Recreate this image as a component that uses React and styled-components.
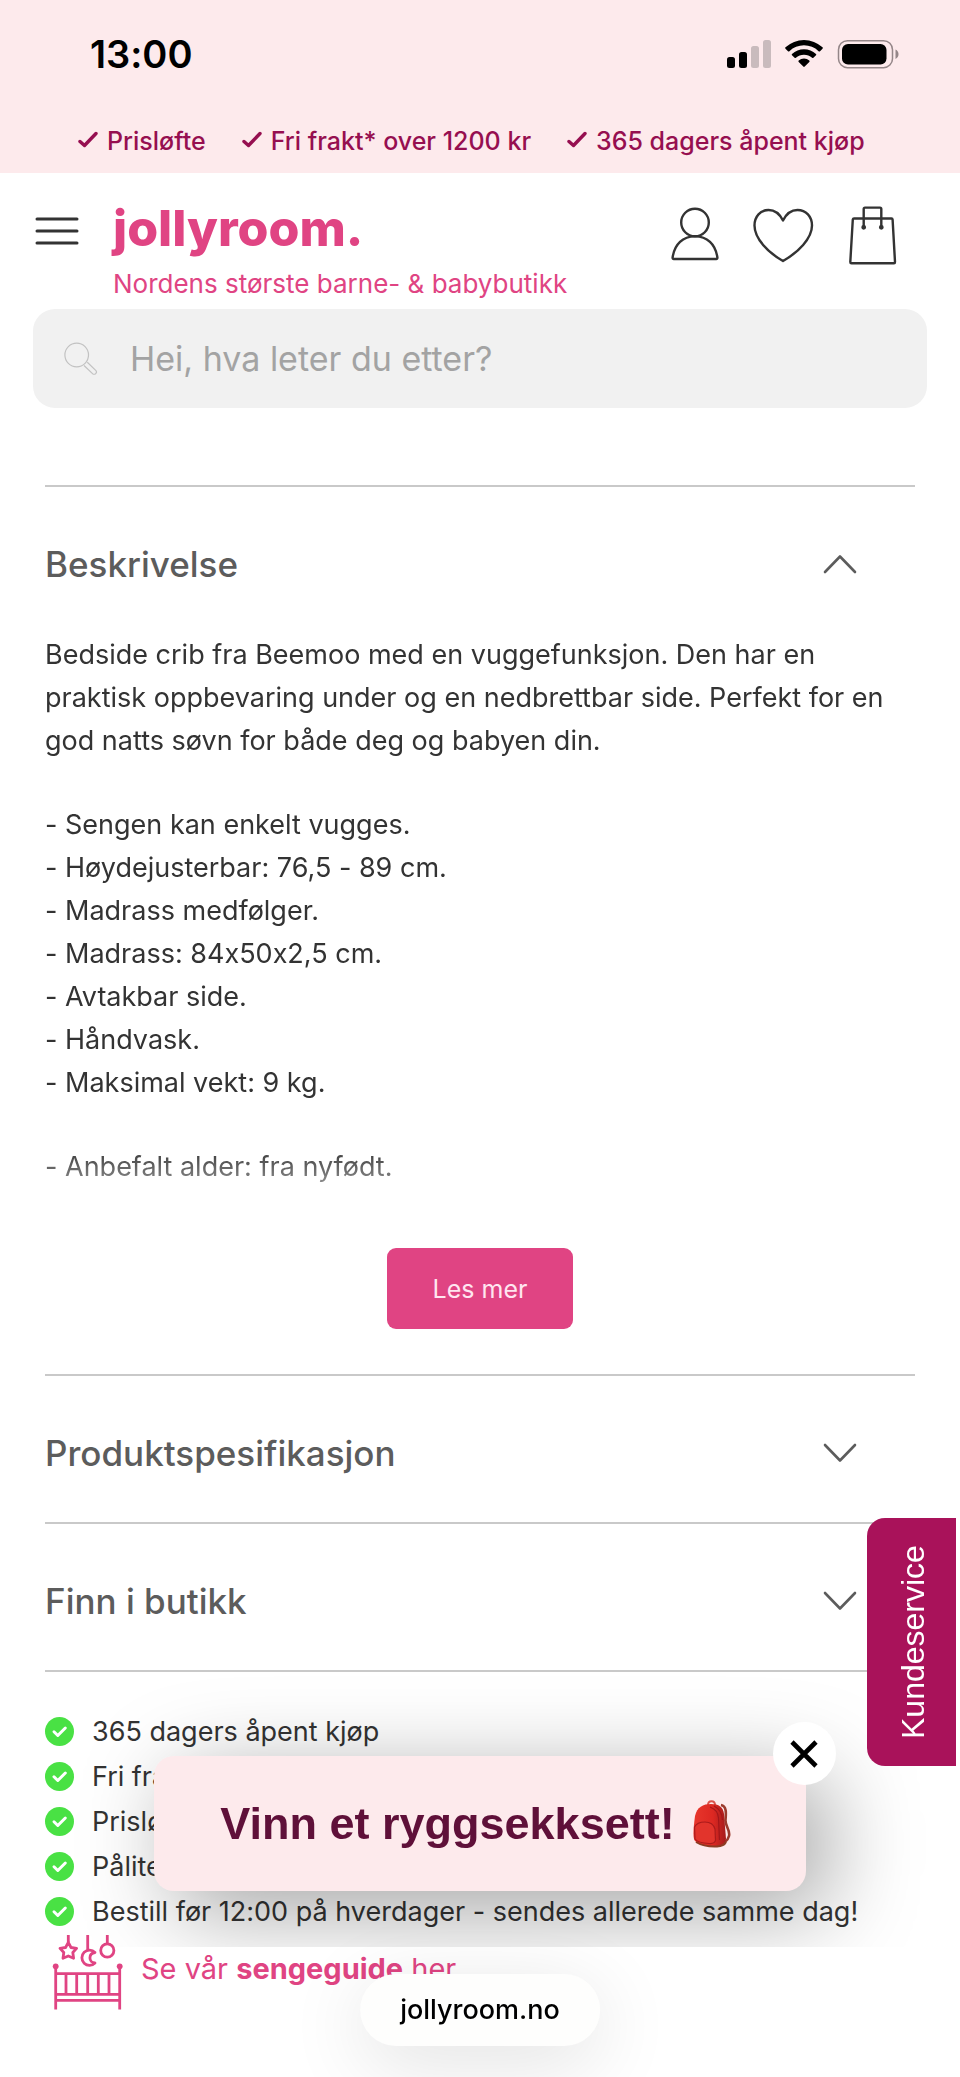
import React, { useState } from "react";
import styled, { createGlobalStyle, ThemeProvider } from "styled-components";

const theme = {
  pink: "#e04483",
  blush: "#fdeaec",
  berry: "#a9125a",
  wine: "#960f50",
  plum: "#5f1039",
  text: "#333333",
  heading: "#5c5c5c",
  rule: "#c9c9c9",
  field: "#f1f1f1",
  green: "#49e144"
};

const usps = ["Prisløfte", "Fri frakt* over 1200 kr", "365 dagers åpent kjøp"];

const features = [
  "- Sengen kan enkelt vugges.",
  "- Høydejusterbar: 76,5 - 89 cm.",
  "- Madrass medfølger.",
  "- Madrass: 84x50x2,5 cm.",
  "- Avtakbar side.",
  "- Håndvask.",
  "- Maksimal vekt: 9 kg."
];

const promises = [
  "365 dagers åpent kjøp",
  "Fri frakt* over 1200 kr",
  "Prisløfte",
  "Pålitelig kundeservice",
  "Bestill før 12:00 på hverdager - sendes allerede samme dag!"
];

const App = () => {
  const [open, setOpen] = useState("description");
  const [showPromo, setShowPromo] = useState(true);

  const toggle = id => setOpen(open === id ? null : id);

  return (
    <ThemeProvider theme={theme}>
      <GlobalStyle />
      <TopBand>
        <StatusBar>
          <Clock>13:00</Clock>
          <StatusIcons />
        </StatusBar>
        <UspList>
          {usps.map(usp => (
            <Usp key={usp}>
              <UspCheck />
              {usp}
            </Usp>
          ))}
        </UspList>
      </TopBand>

      <Header>
        <HeaderRow>
          <MenuButton aria-label="Meny">
            <MenuIcon />
          </MenuButton>
          <Brand href="#">
            <Logo>jollyroom.</Logo>
            <Tagline>Nordens største barne- &amp; babybutikk</Tagline>
          </Brand>
          <Actions>
            <ActionLink href="#konto" aria-label="Min konto">
              <UserIcon />
            </ActionLink>
            <ActionLink href="#favoritter" aria-label="Favoritter">
              <HeartIcon />
            </ActionLink>
            <ActionLink href="#handlekurv" aria-label="Handlekurv">
              <BagIcon />
            </ActionLink>
          </Actions>
        </HeaderRow>
        <SearchBox>
          <SearchIcon />
          <SearchInput
            type="search"
            aria-label="Søk"
            placeholder="Hei, hva leter du etter?"
          />
        </SearchBox>
      </Header>

      <Main>
        <Section
          title="Beskrivelse"
          isOpen={open === "description"}
          onToggle={() => toggle("description")}
        >
          <Description>
            <p>
              Bedside crib fra Beemoo med en vuggefunksjon. Den har en praktisk
              oppbevaring under og en nedbrettbar side. Perfekt for en god natts
              søvn for både deg og babyen din.
            </p>
            <FeatureList>
              {features.map(feature => (
                <li key={feature}>{feature}</li>
              ))}
            </FeatureList>
            <p>- Anbefalt alder: fra nyfødt.</p>
          </Description>
          <ReadMore>Les mer</ReadMore>
        </Section>
        <Section
          title="Produktspesifikasjon"
          isOpen={open === "specification"}
          onToggle={() => toggle("specification")}
        />
        <Section
          title="Finn i butikk"
          isOpen={open === "store"}
          onToggle={() => toggle("store")}
        />

        <PromiseList>
          {promises.map(promise => (
            <PromiseItem key={promise}>
              <RoundCheck />
              {promise}
            </PromiseItem>
          ))}
        </PromiseList>

        <GuideLink href="#sengeguide">
          <CribIcon />
          <GuideText>
            Se vår <strong>sengeguide</strong> her
          </GuideText>
        </GuideLink>
      </Main>

      {showPromo && (
        <PromoLayer>
          <Promo>
            <PromoLink href="#vinn">
              Vinn et ryggsekksett! <Backpack />
            </PromoLink>
            <CloseButton aria-label="Lukk" onClick={() => setShowPromo(false)}>
              <CloseIcon />
            </CloseButton>
          </Promo>
        </PromoLayer>
      )}
      <ServiceTab>Kundeservice</ServiceTab>
      <AddressPill>jollyroom.no</AddressPill>
    </ThemeProvider>
  );
};

const Section = ({ title, isOpen, onToggle, children }) => (
  <SectionContainer>
    <SectionTitle>
      <Trigger aria-expanded={isOpen} onClick={onToggle}>
        {title}
        <Chevron up={isOpen} />
      </Trigger>
    </SectionTitle>
    {isOpen && children && <Panel>{children}</Panel>}
  </SectionContainer>
);

const StatusIcons = () => (
  <svg width="174" height="32" viewBox="0 0 174 32" aria-hidden="true">
    <rect x="1" y="19" width="8" height="11" rx="2.5" />
    <rect x="13" y="14" width="8" height="16" rx="2.5" />
    <g fill="#c9bbbd">
      <rect x="25" y="8" width="8" height="22" rx="2.5" />
      <rect x="37" y="2" width="8" height="28" rx="2.5" />
    </g>
    <path d="M59.5 10.7a1 1 0 0 1 0-1.4 27.2 27.2 0 0 1 37 0 1 1 0 0 1 0 1.4l-2.5 2.5a1 1 0 0 1-1.4 0 21 21 0 0 0-29.2 0 1 1 0 0 1-1.4 0z" />
    <path d="M66 17.3a1 1 0 0 1 0-1.4 17.6 17.6 0 0 1 24 0 1 1 0 0 1 0 1.4l-2.6 2.5a1 1 0 0 1-1.3 0 12 12 0 0 0-16.2 0 1 1 0 0 1-1.3 0z" />
    <path d="M72.7 23.9a1 1 0 0 1 0-1.4 8.2 8.2 0 0 1 10.6 0 1 1 0 0 1 0 1.4l-4.6 4.7a1 1 0 0 1-1.4 0z" />
    <rect
      x="112.5"
      y="2.7"
      width="54"
      height="27"
      rx="9"
      fill="none"
      stroke="#948688"
      strokeWidth="1.5"
    />
    <rect x="116" y="6" width="44.5" height="20.5" rx="6" />
    <path d="M169.500 11.5c4 1.6 4 7.8 0 9.4z" fill="#948688" />
  </svg>
);

const UspCheck = () => (
  <svg width="20" height="20" viewBox="0 0 20 20" aria-hidden="true">
    <path
      d="M2 10.5 6.500 14.5 18 2.5"
      fill="none"
      stroke="currentColor"
      strokeWidth="3.4"
      strokeLinecap="round"
      strokeLinejoin="round"
    />
  </svg>
);

const MenuIcon = () => (
  <LineSvg width="44" height="28" viewBox="0 0 44 28" strokeWidth="3">
    <path d="M2 2h40M2 14h40M2 26h40" />
  </LineSvg>
);

const UserIcon = () => (
  <LineSvg width="48" height="60" viewBox="0 0 48 60" strokeWidth="2.4">
    <circle cx="24" cy="17.5" r="13.8" />
    <path d="M2.8 54C1.8 54 1.500 53.5 1.600 52.5 3.500 39 12 31.4 24 31.4S44.500 39 46.400 52.5C46.500 53.5 46.200 54 45.200 54Z" />
  </LineSvg>
);

const HeartIcon = () => (
  <LineSvg width="62" height="60" viewBox="0 0 62 60" strokeWidth="2.4">
    <path d="M30 15.500C26.5 8.500 21.5 5 15.500 5 7.500 5 1.500 11.500 1.500 20.500 1.500 33.500 15 47.500 30 56 45 47.500 59 33.500 59 20.500 59 11.500 53 5 44.500 5 38.500 5 33.500 8.500 30 15.500Z" />
  </LineSvg>
);

const BagIcon = () => (
  <LineSvg width="48" height="60" viewBox="0 0 48 60" strokeWidth="2.4">
    <path d="M5 13.500H42.500Q43.500 13.500 43.600 14.500L46 57Q46 58.300 45 58.300H2.500Q1.300 58.300 1.300 57L3.800 14.500Q4 13.500 5 13.500Z" />
    <path d="M14.700 21.500V4Q14.700 2.600 16 2.600H31Q32.300 2.600 32.300 4V21.500" />
    <circle cx="14.7" cy="22.3" r="1.2" />
    <circle cx="32.3" cy="22.3" r="1.2" />
  </LineSvg>
);

const SearchIcon = () => (
  <svg width="34" height="34" viewBox="0 0 34 34" aria-hidden="true">
    <g fill="none" stroke="#c2c2c2" strokeWidth="1.2">
      <circle cx="12.7" cy="13" r="11.8" />
      <path d="M20 23.500 28.500 31.600A2 2 0 0 0 31.700 28.400L23.300 20.200" />
    </g>
  </svg>
);

const Chevron = ({ up }) => (
  <LineSvg width="34" height="20" viewBox="0 0 34 20" strokeWidth="2.6">
    <path d={up ? "M2 18 17 2.5 32 18" : "M2 2 17 17.5 32 2"} />
  </LineSvg>
);

const RoundCheck = () => (
  <RoundBadge width="29" height="29" viewBox="0 0 29 29" aria-hidden="true">
    <circle cx="14.5" cy="14.5" r="14.5" />
    <path d="M9 14.8 12.8 18.5 20.3 11" />
  </RoundBadge>
);

const CribIcon = () => (
  <svg width="72" height="77" viewBox="0 0 72 77" aria-hidden="true">
    <g fill="none" stroke="currentColor" strokeWidth="2.8" strokeLinejoin="round">
      <path d="M16.300 1V8M35.700 1V16M55.300 1V10" />
      <path d="M16.300 8.300 19 13.500 24.600 14.400 20.800 18.500 21.600 24.300 16.300 22 11 24.300 11.800 18.500 8 14.400 13.600 13.500Z" />
      <path d="M43 18.500A7.600 7.600 0 1 0 43 29C36.500 28.500 36 19.500 43 18.500Z" />
      <circle cx="55.3" cy="16.5" r="6.6" />
      <path d="M3.700 32V75.500M67.700 32V75.500M3.700 39.700H67.700M3.700 60.300H67.700M3.700 66.300H67.700" />
      <path d="M14 39.700V60.300M24.700 39.700V60.300M35.700 39.700V60.300M46.300 39.700V60.300M57 39.700V60.300" />
    </g>
    <circle cx="3.7" cy="32.3" r="2.9" fill="currentColor" />
    <circle cx="67.7" cy="32.3" r="2.9" fill="currentColor" />
  </svg>
);

const Backpack = () => (
  <svg width="38" height="48" viewBox="0 0 38 48" role="img" aria-label="Ryggsekk">
    <defs>
      <linearGradient id="pack" x1="0" x2="1">
        <stop offset="0" stopColor="#e8362c" />
        <stop offset="0.6" stopColor="#dd2822" />
        <stop offset="1" stopColor="#a51c1c" />
      </linearGradient>
    </defs>
    <path
      d="M28 5C34 6 33 14 32.500 20S37.500 30 36 36 30 43 24 45"
      fill="none"
      stroke="#9a3a2c"
      strokeWidth="2.6"
    />
    <path
      d="M15 5C15 0 22 0 22 5"
      fill="none"
      stroke="#d9534b"
      strokeWidth="2"
    />
    <path
      d="M2 16C4 7 10 4 18 4S30 7 31 14L33 39Q32 46 24 46.500 8 47 2 41-1 38 2 16Z"
      fill="url(#pack)"
    />
    <path
      d="M3 42Q11 47 24 46.500 31 46 33 42"
      fill="none"
      stroke="#8c3b22"
      strokeWidth="2"
    />
    <path
      d="M17 7Q25 10 25.500 18L26.500 40M21 6Q29 10 29.500 20"
      fill="none"
      stroke="#a3161a"
      strokeWidth="1.2"
    />
    <path
      d="M1.500 27Q4 22 12 22T22 29L22.500 40Q22 44 16 43.500 5 43 2 39Z"
      fill="#e2342c"
      stroke="#ab1b1b"
      strokeWidth="1.2"
    />
  </svg>
);

const CloseIcon = () => (
  <svg width="28" height="28" viewBox="0 0 28 28" aria-hidden="true">
    <path d="M2 2 26 26M26 2 2 26" stroke="#000" strokeWidth="4.6" />
  </svg>
);

const GlobalStyle = createGlobalStyle`
  * {
    box-sizing: border-box;
  }

  body {
    margin: 0;
    background: #ffffff;
    color: ${({ theme }) => theme.text};
    font-family: Inter, "Liberation Sans", sans-serif;
    font-size: 27px;
    font-variant-ligatures: no-contextual;
  }

  button,
  input {
    font-family: inherit;
  }

  ul,
  p,
  h2 {
    margin: 0;
    padding: 0;
  }

  ul {
    list-style: none;
  }

  a {
    color: inherit;
    text-decoration: none;
  }

  svg {
    display: block;
    flex-shrink: 0;
  }
`;

const LineSvg = styled.svg.attrs({ "aria-hidden": true })`
  fill: none;
  stroke: currentColor;
  stroke-linecap: round;
  stroke-linejoin: round;
`;

const TopBand = styled.div`
  background: ${({ theme }) => theme.blush};
`;

const StatusBar = styled.div`
  height: 108px;
  padding: 0 60px 0 90px;
  display: flex;
  align-items: center;
  justify-content: space-between;
  color: #000000;
`;

const Clock = styled.time`
  font-size: 38px;
  font-weight: 600;
`;

const UspList = styled.ul`
  height: 65px;
  padding-left: 78px;
  display: flex;
  align-items: center;
  gap: 36px;
  color: ${({ theme }) => theme.wine};
  font-size: 25px;
  font-weight: 500;
`;

const Usp = styled.li`
  display: flex;
  align-items: center;
  gap: 9px;
  white-space: nowrap;
`;

const Header = styled.header`
  padding: 25px 33px 0;
`;

const HeaderRow = styled.div`
  padding-right: 30px;
  display: flex;
  align-items: flex-start;
`;

const MenuButton = styled.button`
  margin: 19px 34px 0 2px;
  padding: 0;
  border: 0;
  background: none;
  color: ${({ theme }) => theme.text};
`;

const Brand = styled.a`
  flex: 1;
  color: ${({ theme }) => theme.pink};
  white-space: nowrap;
`;

const Logo = styled.div`
  font-size: 50px;
  font-weight: 800;
  line-height: 60px;
`;

const Tagline = styled.div`
  margin: 8px 0 7px;
  font-size: 26px;
  line-height: 36px;
`;

const Actions = styled.nav`
  margin-top: 7px;
  display: flex;
  gap: 34px;
`;

const ActionLink = styled.a`
  color: ${({ theme }) => theme.text};
`;

const SearchBox = styled.label`
  height: 99px;
  padding: 0 31px;
  display: flex;
  align-items: center;
  gap: 32px;
  border-radius: 22px;
  background: ${({ theme }) => theme.field};
`;

const SearchInput = styled.input`
  flex: 1;
  padding: 0;
  border: 0;
  outline: none;
  background: none;
  font-size: 34px;

  &::placeholder {
    color: #a3a3a3;
  }
`;

const Main = styled.main`
  padding: 77px 45px 0;
`;

const SectionContainer = styled.section`
  border-top: 2px solid ${({ theme }) => theme.rule};

  &:last-of-type {
    border-bottom: 2px solid ${({ theme }) => theme.rule};
  }
`;

const SectionTitle = styled.h2`
  font-size: 35px;
  font-weight: 500;
`;

const Trigger = styled.button`
  width: 100%;
  height: 146px;
  padding: 8px 58px 0 0;
  display: flex;
  align-items: center;
  justify-content: space-between;
  border: 0;
  background: none;
  color: ${({ theme }) => theme.heading};
  font-size: inherit;
  font-weight: inherit;
`;

const Panel = styled.div`
  padding-bottom: 45px;
  display: flex;
  flex-direction: column;
  align-items: center;
`;

const Description = styled.div`
  align-self: stretch;
  padding-bottom: 40px;
  line-height: 43px;
  mask-image: linear-gradient(to top, transparent, #000000 80px);
`;

const FeatureList = styled.ul`
  margin: 41px 0;
`;

const ReadMore = styled.button`
  height: 81px;
  margin-top: 20px;
  padding: 0 46px;
  border: 0;
  border-radius: 9px;
  background: ${({ theme }) => theme.pink};
  color: #ffe6f0;
  font-size: 25px;
`;

const PromiseList = styled.ul`
  margin-top: 37px;
`;

const PromiseItem = styled.li`
  height: 45px;
  display: flex;
  align-items: center;
  gap: 18px;
`;

const RoundBadge = styled.svg`
  fill: ${({ theme }) => theme.green};

  path {
    fill: none;
    stroke: #ffffff;
    stroke-width: 3px;
    stroke-linecap: round;
    stroke-linejoin: round;
  }
`;

const GuideLink = styled.a`
  padding-left: 7px;
  display: flex;
  align-items: center;
  gap: 17px;
  color: ${({ theme }) => theme.pink};
`;

const GuideText = styled.span`
  padding-bottom: 8px;
  font-size: 29px;
`;

const PromoLayer = styled.div`
  position: fixed;
  inset: 0 0 130px;
  overflow: hidden;
  display: flex;
  align-items: flex-end;
  justify-content: center;
  pointer-events: none;
`;

const Promo = styled.aside`
  position: relative;
  margin-bottom: 56px;
  border-radius: 20px;
  background: ${({ theme }) => theme.blush};
  box-shadow: 20px 20px 90px rgba(0, 0, 0, 0.36);
  pointer-events: auto;
`;

const PromoLink = styled.a`
  height: 135px;
  padding: 0 75px 0 66px;
  display: flex;
  align-items: center;
  gap: 18px;
  color: ${({ theme }) => theme.plum};
  font-family: "Liberation Sans", Arial, sans-serif;
  font-size: 45px;
  font-weight: 700;
  white-space: nowrap;
`;

const CloseButton = styled.button`
  position: absolute;
  top: -34px;
  right: -30px;
  width: 63px;
  height: 63px;
  padding: 0;
  display: flex;
  align-items: center;
  justify-content: center;
  border: 0;
  border-radius: 50%;
  background: #ffffff;
`;

const ServiceTab = styled.button`
  position: fixed;
  right: 4px;
  bottom: 311px;
  width: 89px;
  height: 248px;
  padding: 0 4px 0 0;
  border: 0;
  border-radius: 0 18px 18px 0;
  background: ${({ theme }) => theme.berry};
  color: #ffffff;
  font-family: "Liberation Sans", Arial, sans-serif;
  font-size: 32px;
  writing-mode: vertical-rl;
  transform: rotate(180deg);
`;

const AddressPill = styled.div`
  position: fixed;
  left: 50%;
  bottom: 31px;
  transform: translateX(-50%);
  padding: 0 40px;
  border-radius: 36px;
  background: #fefefd;
  box-shadow: 0 16px 80px rgba(0, 0, 0, 0.12);
  color: #000000;
  font-size: 27px;
  font-weight: 500;
  line-height: 72px;
`;

export default App;
